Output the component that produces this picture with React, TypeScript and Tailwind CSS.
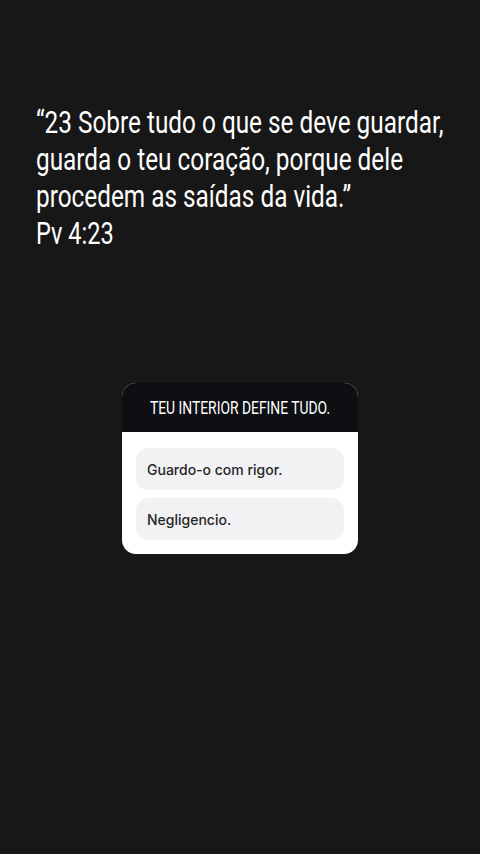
import React from "react";

export default function App() {
  return (
    <div className="w-[480px] h-[854px] bg-[#171717] flex flex-col items-center overflow-hidden">
      <div className="w-full pl-[36px] pt-[104px] text-white text-[31px] leading-[37px] font-['Roboto',sans-serif] whitespace-nowrap">
        <div className="origin-left scale-x-[0.785]">“23 Sobre tudo o que se deve guardar,</div>
        <div className="origin-left scale-x-[0.785]">guarda o teu coração, porque dele</div>
        <div className="origin-left scale-x-[0.785]">procedem as saídas da vida.”</div>
        <div className="origin-left scale-x-[0.76]">Pv 4:23</div>
      </div>
      <div className="mt-[131px] w-[236px] rounded-[14px] overflow-hidden bg-white">
        <div className="h-[49px] bg-[#0e0f13] flex items-center justify-center text-white text-[18px] font-['Roboto',sans-serif] whitespace-nowrap">
          <span className="scale-x-[0.77]">TEU INTERIOR DEFINE TUDO.</span>
        </div>
        <div className="px-[14px] pt-[16px] pb-[14px] flex flex-col gap-[8px] font-['Inter',sans-serif]">
          <div className="h-[42px] rounded-[12px] bg-[#f2f2f4] flex items-center pl-[11px] text-[14px] font-medium text-[#262626]">
            Guardo-o com rigor.
          </div>
          <div className="h-[42px] rounded-[12px] bg-[#f2f2f4] flex items-center pl-[11px] text-[14px] font-medium text-[#262626]">
            Negligencio.
          </div>
        </div>
      </div>
    </div>
  );
}
